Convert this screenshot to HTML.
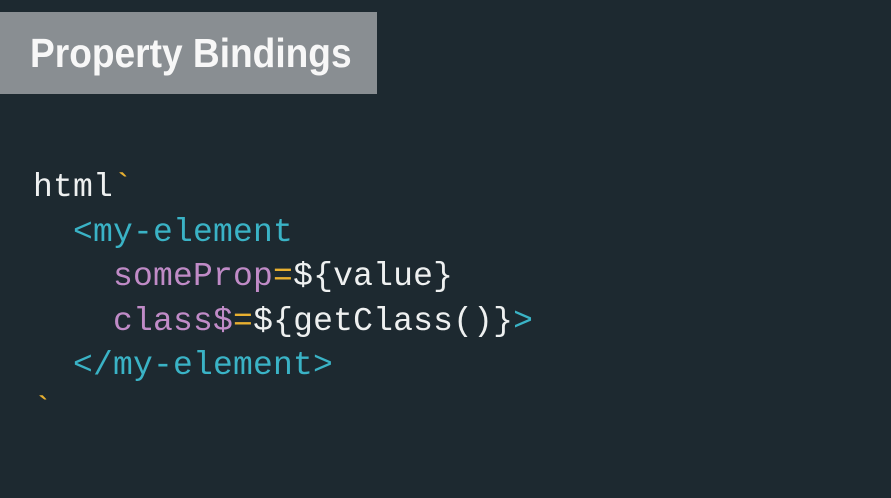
<!DOCTYPE html>
<html><head><style>
html,body{margin:0;width:891px;height:498px;background:#1d2930;overflow:hidden}
.t{position:absolute;left:0;top:12px;width:377px;height:82px;background:#898e92}
.t span{position:absolute;left:30px;top:17px;font:bold 41px/48px "Liberation Sans",sans-serif;color:#f7f7f7;transform:scaleX(0.905);transform-origin:0 0;white-space:nowrap}
pre{position:absolute;left:33px;top:166px;margin:0;font:33px/44.6px "Liberation Mono",monospace;color:#eef0f0;letter-spacing:0.2px}
.c{color:#3ab3c6}.p{color:#c08bc7}.y{color:#e8b030}
</style></head><body>
<div class="t"><span>Property Bindings</span></div>
<pre>html<span class="y">`</span>
  <span class="c">&lt;my-element</span>
    <span class="p">someProp</span><span class="y">=</span>${value}
    <span class="p">class$</span><span class="y">=</span>${getClass()}<span class="c">&gt;</span>
  <span class="c">&lt;/my-element&gt;</span>
<span class="y">`</span></pre>
</body></html>
